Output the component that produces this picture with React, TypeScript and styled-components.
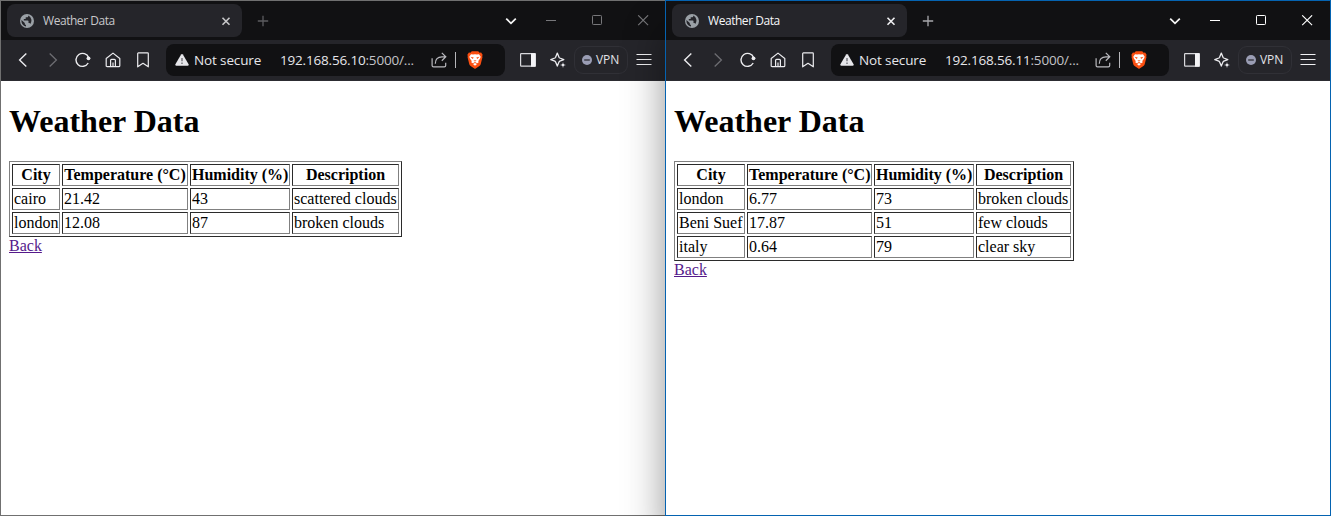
import React from "react";
import styled, { createGlobalStyle } from "styled-components";

const GlobalStyle = createGlobalStyle`
  html, body { margin: 0; padding: 0; }
  body { background: #fff; overflow: hidden; }
  *, *::before, *::after { box-sizing: border-box; }
`;

const uiFont = `"Segoe UI", "Open Sans", "Noto Sans", sans-serif`;

const Desktop = styled.div`
  display: grid;
  grid-template-columns: 665px 666px;
  width: 1331px;
  height: 516px;
  overflow: hidden;
`;

const Window = styled.section<{ $active?: boolean }>`
  position: relative;
  z-index: ${(p) => (p.$active ? 1 : 0)};
  display: flex;
  flex-direction: column;
  width: ${(p) => (p.$active ? 666 : 667)}px;
  height: 516px;
  border: 1px solid ${(p) => (p.$active ? "#0563b1" : "#707070")};
  background: #fff;
  box-shadow: ${(p) => (p.$active ? "0 30px 38px rgba(0, 0, 0, 0.42)" : "none")};
`;

const TitleBar = styled.header`
  display: flex;
  align-items: center;
  flex: none;
  height: 39px;
  padding-left: 6px;
  background: #111113;
`;

const Tab = styled.div`
  display: flex;
  align-items: center;
  width: 235px;
  height: 33px;
  padding: 0 10px 0 13px;
  border-radius: 8px;
  background: #25252a;
`;

const TabTitle = styled.span<{ $active?: boolean }>`
  flex: 1;
  margin-left: 9px;
  font: 12px/16px ${uiFont};
  letter-spacing: -0.45px;
  color: ${(p) => (p.$active ? "#f6f6f8" : "#c8c8ca")};
`;

const IconSlot = styled.span<{ $w: number; $color?: string }>`
  display: flex;
  align-items: center;
  justify-content: center;
  flex: none;
  width: ${(p) => p.$w}px;
  color: ${(p) => p.$color ?? "#ececef"};
  svg { display: block; }
`;

const Spacer = styled.div`
  flex: 1;
`;

const Toolbar = styled.nav`
  display: flex;
  align-items: center;
  flex: none;
  height: 41px;
  padding: 0 7px 1px;
  background: #25252a;
  border-bottom: 1px solid #2c2c31;
`;

const AddressBar = styled.div`
  display: flex;
  align-items: center;
  flex: 1;
  height: 32px;
  margin: 0 8px;
  padding: 0 21px 0 8px;
  border-radius: 8px;
  background: #111113;
  white-space: nowrap;
`;

const Security = styled.span`
  width: 86px;
  margin-left: 4px;
  font: 13.5px/20px ${uiFont};
  letter-spacing: -0.13px;
  color: #e6e6ea;
`;

const Url = styled.span`
  flex: 1;
  font: 13.5px/20px ${uiFont};
  letter-spacing: -0.18px;
  color: #e6e6ea;
`;

const UrlTail = styled.span`
  color: #c3c3c8;
`;

const Divider = styled.span`
  width: 1px;
  height: 16px;
  margin: 0 10px 0 7px;
  background: #b6b6ba;
`;

const VpnPill = styled.span`
  display: flex;
  align-items: center;
  gap: 4px;
  width: 54px;
  height: 28px;
  margin: 0 1px;
  padding-left: 7px;
  border: 1px solid #303036;
  border-radius: 9px;
  font: 500 12px/16px ${uiFont};
  letter-spacing: -0.1px;
  color: #e2e2e7;
`;

const Page = styled.main`
  flex: 1;
  padding: 0 8px;
  font: 16px/18px "Times New Roman", "Liberation Serif", serif;
  color: #000;
`;

const Heading = styled.h1`
  margin: 22.44px 0 20.44px;
  font-size: 32px;
  font-weight: bold;
  line-height: 37px;
`;

const DataTable = styled.table<{ $w: number }>`
  table-layout: fixed;
  width: ${(p) => p.$w}px;
  border: 1px solid;
  border-color: #808080 #2b2b2b #2b2b2b #808080;
  border-collapse: separate;
  border-spacing: 2px;
  font-size: 16px;
`;

const cellBase = `
  height: 22px;
  padding: 1px;
  border: 1px solid;
  border-color: #2b2b2b #808080 #808080 #2b2b2b;
  line-height: 18px;
  white-space: nowrap;
`;

const HeadCell = styled.th`
  ${cellBase}
  text-align: center;
`;

const Cell = styled.td`
  ${cellBase}
`;

const BackLink = styled.a`
  color: #551a8b;
  text-decoration: underline;
`;

const Globe = () => (
  <svg width="14" height="14" viewBox="0 0 14 14">
    <circle cx="7" cy="7" r="7" fill="#9aa0a6" />
    <path
      d="M1.5 6.1 4.8 9v.8c0 .7.5 1.2 1.2 1.2v1.6A5.7 5.7 0 0 1 1.5 6.1ZM8.3 1.5v.4c0 .7-.6 1.3-1.3 1.3H5.7v1.2c0 .4-.3.7-.7.7H3.8v1.3h4c.4 0 .7.3.7.7v1.9h.6c.6 0 1.1.4 1.2.9A5.6 5.6 0 0 0 8.3 1.5Z"
      fill="#25252a"
    />
  </svg>
);

const TabClose = () => (
  <svg width="12" height="12" viewBox="0 0 12 12" fill="none" stroke="currentColor" strokeWidth="1.6">
    <path d="m2.5 2.700 7 7m0-7-7 7" />
  </svg>
);

const Plus = () => (
  <svg width="12" height="12" viewBox="0 0 12 12" fill="none" stroke="currentColor" strokeWidth="1.3">
    <path d="M6 .8v10.400M.8 6h10.400" />
  </svg>
);

const ChevronDown = () => (
  <svg width="12" height="12" viewBox="0 0 12 12" fill="none" stroke="#f4f4f4" strokeWidth="1.8">
    <path d="m1.200 3.700 4.800 4.600 4.800-4.600" />
  </svg>
);

const Minimize = () => (
  <svg width="12" height="11" viewBox="0 0 12 11" stroke="currentColor" fill="none">
    <path d="M1 5.500h10" />
  </svg>
);

const Maximize = () => (
  <svg width="12" height="11" viewBox="0 0 12 11" stroke="currentColor" fill="none">
    <rect x="1.500" y=".5" width="9" height="9" rx=".8" />
  </svg>
);

const CloseWindow = () => (
  <svg width="12" height="11" viewBox="0 0 12 11" stroke="currentColor" strokeWidth="1.100" fill="none">
    <path d="m1.200.300 9.900 9.900m0-9.900-9.900 9.900" />
  </svg>
);

const Back = () => (
  <svg width="16" height="16" viewBox="0 0 16 16" fill="none" stroke="currentColor" strokeWidth="1.400">
    <path d="M11.300 1.500 4.600 8l6.700 6.500" />
  </svg>
);

const Forward = () => (
  <svg width="16" height="16" viewBox="0 0 16 16" fill="none" stroke="currentColor" strokeWidth="1.300">
    <path d="M4.700 1.500 11.400 8l-6.700 6.500" />
  </svg>
);

const Reload = () => (
  <svg width="16" height="16" viewBox="0 0 16 16" fill="none" stroke="currentColor" strokeWidth="1.400">
    <path d="M13.600 5.600A6.500 6.500 0 1 0 13.200 11" />
    <circle cx="13.500" cy="6.300" r="1.900" fill="currentColor" stroke="none" />
  </svg>
);

const Home = () => (
  <svg width="16" height="16" viewBox="0 0 16 16" fill="none" stroke="currentColor" strokeWidth="1.200" strokeLinejoin="round">
    <path d="M1.200 6.500 8 1.100l6.800 5.400v7.200c0 .6-.4 1-1 1H2.200c-.6 0-1-.4-1-1Z" />
    <path d="M5.600 14.700V8.300c0-.6.400-1 1-1h2.800c.6 0 1 .4 1 1v6.400M8 10.500v4" />
  </svg>
);

const Bookmark = () => (
  <svg width="16" height="16" viewBox="0 0 16 16" fill="none" stroke="currentColor" strokeWidth="1.200" strokeLinejoin="round">
    <path d="M3.400.9h9.200c.4 0 .7.3.7.7v13.200L8 11.300l-5.300 3.500V1.600c0-.4.3-.7.700-.7Z" />
  </svg>
);

const Warning = () => (
  <svg width="14" height="14" viewBox="0 0 14 14">
    <path d="M7 1c.4 0 .7.200.9.500l5.700 9.800c.4.700-.1 1.500-.9 1.500H1.300c-.8 0-1.300-.8-.9-1.500L6.100 1.500c.2-.3.500-.5.900-.5Z" fill="#e6e6ea" />
    <path d="M7 5v3.300M7 9.500v1.500" stroke="#66666b" strokeWidth="1.300" />
  </svg>
);

const Share = () => (
  <svg width="16" height="16" viewBox="0 0 16 16" fill="none" stroke="#b9b9be" strokeWidth="1.200">
    <path d="M1.100 6.200v7.200c0 .8.6 1.400 1.400 1.400h10.800c.8 0 1.400-.6 1.400-1.400v-2.600" />
    <path d="M4.300 11.700C4.300 7.500 6.800 4.800 11 4.800h3.500M10.800.9l4 3.900-4 3.900" />
  </svg>
);

const Shield = () => (
  <svg width="16" height="18" viewBox="0 0 16 18">
    <path d="M4.800.2h6.400l1.400 1.500 1.500-.2 1.500 2.200-.4 1.500.3.900-1.800 7.100c-.2.700-.7 1.300-1.300 1.700L8.700 17.600c-.4.300-1 .3-1.400 0l-3.700-2.700c-.6-.4-1.100-1-1.300-1.700L.5 6.100l.3-.9-.4-1.500 1.500-2.200 1.500.2Z" fill="#fb4f11" />
    <path d="m4 3.300 2.100.3 1.900-.4 1.900.4 2.100-.3 1.700 2.400-.6 1.700-1.800 2.600.3 1.500-1.500.7L8 11.100l-2.100 1.100-1.500-.7.300-1.500-1.800-2.600-.6-1.700ZM8 12l2 1.100-2 1.600-2-1.600Z" fill="#fff" />
    <path d="m3.500 5.700 3.200.9-1 1.400ZM12.500 5.700l-3.200.9 1 1.400ZM6.400 9l1.600.6L9.600 9 8 10.700Z" fill="#fb4f11" />
  </svg>
);

const Sidebar = () => (
  <svg width="16" height="14" viewBox="0 0 16 14">
    <rect x=".6" y=".6" width="14.600" height="12.600" rx=".6" fill="none" stroke="#d9d9dd" strokeWidth="1.200" />
    <path d="M11 .3h4.700v13.400H11Z" fill="#f4f4f6" />
  </svg>
);

const Sparkle = () => (
  <svg width="16" height="16" viewBox="0 0 16 16" fill="none" stroke="currentColor" strokeWidth="1.300" strokeLinejoin="round">
    <path d="M7.300 1.100 9 5.200c.2.400.4.600.8.800l4 1.600-4 1.600c-.4.200-.6.400-.8.800L7.300 14.100 5.600 10c-.2-.4-.4-.6-.8-.8L.8 7.600l4-1.600c.4-.2.600-.4.800-.8Z" />
    <path d="m13 9.900.9 2.200 2.200.9-2.200.9-.9 2.200-.9-2.200-2.200-.9 2.200-.9Z" fill="currentColor" stroke="#25252a" strokeWidth=".5" />
  </svg>
);

const VpnDot = () => (
  <svg width="10" height="10" viewBox="0 0 10 10">
    <circle cx="5" cy="5" r="5" fill="#9a9db4" />
    <path d="M2.200 5h5.600" stroke="#25252a" strokeWidth="1.200" />
  </svg>
);

const Menu = () => (
  <svg width="16" height="13" viewBox="0 0 16 13" stroke="#f1f1f3" strokeWidth="1.200">
    <path d="M.5 1.500h15M.5 6.500h15M.5 11.500h15" />
  </svg>
);

type BrowserProps = {
  active?: boolean;
  host: string;
  columns: number[];
  rows: string[][];
};

const headers = ["City", "Temperature (°C)", "Humidity (%)", "Description"];

function Browser({ active, host, columns, rows }: BrowserProps) {
  const controls = active ? "#ffffff" : "#77777a";
  const tableWidth = columns.reduce((sum, w) => sum + w, 0) + (columns.length + 1) * 2 + 2;
  return (
    <Window $active={active}>
      <TitleBar>
        <Tab>
          <Globe />
          <TabTitle $active={active}>Weather Data</TabTitle>
          <IconSlot $w={12} $color={active ? "#f0f0f2" : "#c8c8ca"}><TabClose /></IconSlot>
        </Tab>
        <IconSlot $w={42} $color={active ? "#a9a9ad" : "#5c5c60"}><Plus /></IconSlot>
        <Spacer />
        <IconSlot $w={34}><ChevronDown /></IconSlot>
        <IconSlot $w={46} $color={controls}><Minimize /></IconSlot>
        <IconSlot $w={46} $color={controls}><Maximize /></IconSlot>
        <IconSlot $w={46} $color={controls}><CloseWindow /></IconSlot>
      </TitleBar>
      <Toolbar>
        <IconSlot $w={30}><Back /></IconSlot>
        <IconSlot $w={30} $color="#6d6d72"><Forward /></IconSlot>
        <IconSlot $w={30}><Reload /></IconSlot>
        <IconSlot $w={30}><Home /></IconSlot>
        <IconSlot $w={30}><Bookmark /></IconSlot>
        <AddressBar>
          <IconSlot $w={16}><Warning /></IconSlot>
          <Security>Not secure</Security>
          <Url>{host}<UrlTail>:5000/...</UrlTail></Url>
          <IconSlot $w={18}><Share /></IconSlot>
          <Divider />
          <IconSlot $w={18}><Shield /></IconSlot>
        </AddressBar>
        <IconSlot $w={30}><Sidebar /></IconSlot>
        <IconSlot $w={30}><Sparkle /></IconSlot>
        <VpnPill><VpnDot />VPN</VpnPill>
        <IconSlot $w={30}><Menu /></IconSlot>
      </Toolbar>
      <Page>
        <Heading>Weather Data</Heading>
        <DataTable $w={tableWidth}>
          <colgroup>
            {columns.map((w, i) => <col key={i} width={w} />)}
          </colgroup>
          <thead>
            <tr>{headers.map((h) => <HeadCell key={h}>{h}</HeadCell>)}</tr>
          </thead>
          <tbody>
            {rows.map((row) => (
              <tr key={row[0]}>{row.map((value, i) => <Cell key={i}>{value}</Cell>)}</tr>
            ))}
          </tbody>
        </DataTable>
        <BackLink href="#">Back</BackLink>
      </Page>
    </Window>
  );
}

export default function App() {
  return (
    <>
      <GlobalStyle />
      <Desktop>
        <Browser
          host="192.168.56.10"
          columns={[48, 126, 100, 107]}
          rows={[
            ["cairo", "21.42", "43", "scattered clouds"],
            ["london", "12.08", "87", "broken clouds"],
          ]}
        />
        <Browser
          active
          host="192.168.56.11"
          columns={[68, 125, 100, 95]}
          rows={[
            ["london", "6.77", "73", "broken clouds"],
            ["Beni Suef", "17.87", "51", "few clouds"],
            ["italy", "0.64", "79", "clear sky"],
          ]}
        />
      </Desktop>
    </>
  );
}
